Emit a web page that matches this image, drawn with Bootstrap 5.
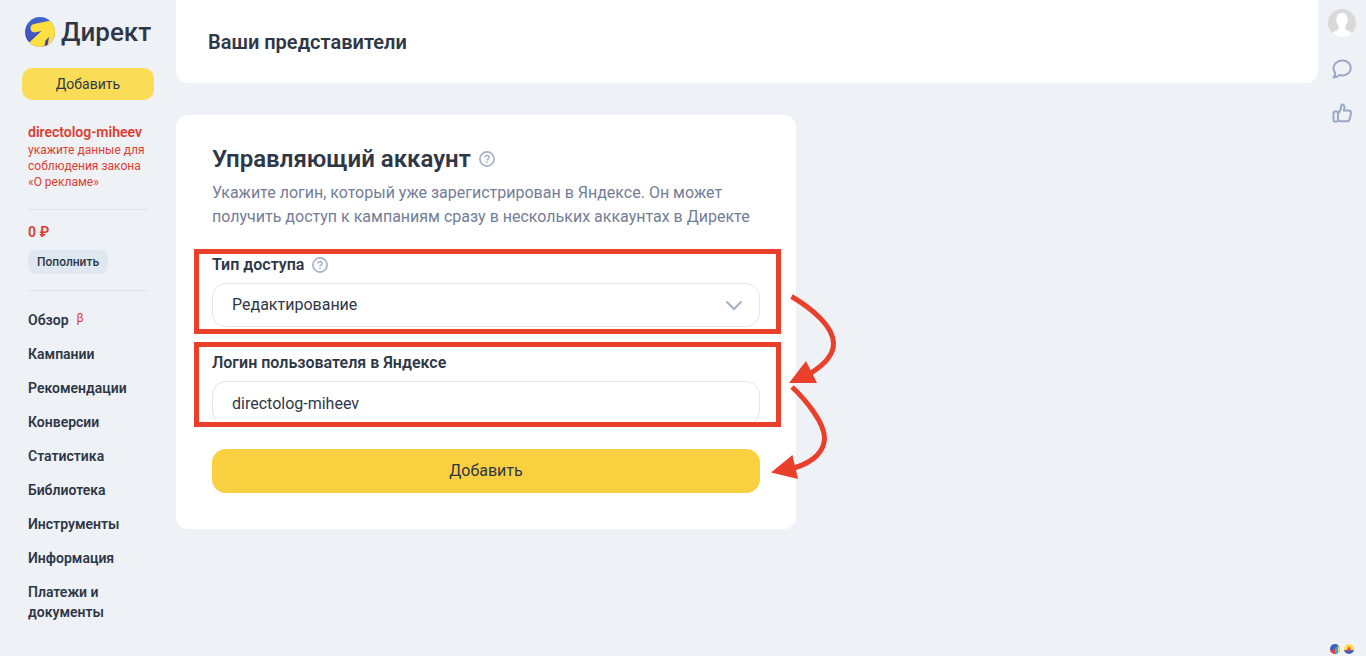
<!DOCTYPE html>
<html lang="ru">
<head>
<meta charset="utf-8">
<meta name="viewport" content="width=device-width, initial-scale=1">
<title>Директ — Ваши представители</title>
<link href="https://cdn.jsdelivr.net/npm/bootstrap@5.3.0/dist/css/bootstrap.min.css" rel="stylesheet">
<style>
  body { background: #eef2f7; color: #2f3747; font-family: Roboto, "Noto Sans", sans-serif; font-size: 14px; line-height: 20px; }
  a { text-decoration: none; }
  .side { width: 176px; padding: 16px 22px 16px; }
  .brand-link { padding-left: 2px; gap: 5px; }
  .brand-name { font-size: 26px; line-height: 32px; font-weight: 500; color: #2f3747; }
  .btn-sun { --bs-btn-color: #2f3747; --bs-btn-hover-color: #2f3747; --bs-btn-bg: #fbdc57; --bs-btn-hover-bg: #f9d040; border: 0; border-radius: 10px; height: 32px; font-size: 14px; line-height: 20px; }
  .btn-add { margin-top: 20px; }
  .btn-big { --bs-btn-bg: #f9d040; border-radius: 14px; height: 44px; font-size: 16px; }
  .side-body { padding: 0 6px; margin-top: 22px; }
  .alert-red { color: #dd3d2f; }
  .login { font-weight: 600; }
  .notice { font-size: 12px; line-height: 16px; font-weight: 400; }
  .side-line { border-top: 1px solid #dde4ed; }
  .sum-line { margin-top: 19px; padding-top: 12px; }
  .btn-top { --bs-btn-color: #2f3747; --bs-btn-bg: #dfe7f0; --bs-btn-hover-bg: #d3deea; --bs-btn-hover-color: #2f3747; border: 0; border-radius: 8px; height: 24px; padding: 0 9px; font-size: 12px; line-height: 24px; font-weight: 500; }
  .menu-line { margin-top: 16px; padding-top: 12px; }
  .menu a { color: #2f3747; font-weight: 600; padding: 7px 0; }
  .menu .beta { font-size: 12px; line-height: 1; font-weight: 400; margin-left: 8px; top: -3px; }
  .page-head { height: 83px; border-radius: 0 0 12px 12px; padding: 0 32px; }
  .page-head h1 { font-size: 20px; line-height: 24px; font-weight: 600; }
  .panel { max-width: 620px; border-radius: 12px; margin-top: 32px; padding: 28px 36px 36px; }
  .panel h2 { font-size: 24px; line-height: 32px; font-weight: 600; }
  .hint { font-size: 16px; line-height: 24px; color: #737d95; margin-top: 6px; }
  .ask { width: 16px; height: 16px; }
  .field label { display: block; font-size: 16px; line-height: 24px; font-weight: 600; }
  .field .form-control, .field .form-select { height: 44px; margin-top: 6px; padding: 0 19px; border: 1px solid #e3e6f0; border-radius: 14px; color: #2f3747; font-size: 16px; line-height: 24px; }
  .field .form-select { background-image: none; }
  .chevron { right: 17px; bottom: 12px; pointer-events: none; }
  .frame { left: -18px; right: -21px; height: 85px; border: 5px solid #ea402b; pointer-events: none; }
  .frame-type { top: -4px; }
  .frame-login { top: -9px; }
  .under { height: 4px; left: 0; right: 0; bottom: 0; background: #fff; }
  .arrows { left: calc(100% - 26px); top: 175px; pointer-events: none; }
  .rail { width: 48px; padding: 9px 0 2px; }
  .rail-link { margin-top: 22px; }
</style>
</head>
<body>
<div class="d-flex min-vh-100">
  <aside class="side flex-shrink-0">
    <a href="#" class="brand-link d-flex align-items-center" aria-label="Директ">
      <svg class="flex-shrink-0" width="32" height="32" viewBox="0 0 32 32" aria-hidden="true">
        <defs>
          <clipPath id="disc"><circle cx="16" cy="16" r="15"/></clipPath>
          <linearGradient id="blue" x2="0" y2="1"><stop offset="0" stop-color="#4268cf"/><stop offset="1" stop-color="#4346b4"/></linearGradient>
        </defs>
        <g clip-path="url(#disc)">
          <rect width="32" height="32" fill="url(#blue)"/>
          <path d="M10 8 27 4.500 32 8V32H22L24.500 21.500 12 33 2 29.500 17.500 15 10.500 16.500C5.500 16.500 5 9 10 8Z" fill="#ffe03f"/>
          <path d="M24.500 21.500 14 28.500 12 33H20.500Z" fill="#ffe03f"/>
          <path d="M20 33 21.500 24.500 25 21 23 33Z" fill="#4b3fae"/>
        </g>
      </svg>
      <span class="brand-name">Директ</span>
    </a>
    <button type="button" class="btn btn-sun btn-add w-100 py-0">Добавить</button>
    <div class="side-body">
      <div class="alert-red">
        <a href="#" class="alert-red login d-block text-nowrap">directolog-miheev</a>
        <a href="#" class="alert-red notice d-block">укажите данные для соблюдения закона «О&nbsp;рекламе»</a>
      </div>
      <div class="side-line sum-line"></div>
      <div class="alert-red login">0 ₽</div>
      <button type="button" class="btn btn-top mt-2">Пополнить</button>
      <div class="side-line menu-line"></div>
      <nav class="menu d-flex flex-column">
        <a href="#">Обзор<sup class="beta alert-red">β</sup></a>
        <a href="#">Кампании</a>
        <a href="#">Рекомендации</a>
        <a href="#">Конверсии</a>
        <a href="#">Статистика</a>
        <a href="#">Библиотека</a>
        <a href="#">Инструменты</a>
        <a href="#">Информация</a>
        <a href="#">Платежи и документы</a>
      </nav>
    </div>
  </aside>

  <main class="flex-grow-1">
    <header class="page-head bg-white d-flex align-items-center"><h1 class="m-0">Ваши представители</h1></header>
    <form class="panel bg-white position-relative">
      <div class="d-flex align-items-center gap-2">
        <h2 class="m-0">Управляющий аккаунт</h2>
        <svg class="ask" viewBox="0 0 16 16" fill="none" stroke="#a6b0c6" stroke-width="1.700" aria-hidden="true"><circle cx="8" cy="8" r="7.100"/><path d="M5.900 6.500a2.100 2 0 1 1 3 1.700Q8 8.600 8 9.500M8 10.500v1.500" stroke-width="1.500"/></svg>
      </div>
      <p class="hint mb-4">Укажите логин, который уже зарегистрирован в Яндексе. Он может получить доступ к кампаниям сразу в нескольких аккаунтах в Директе</p>
      <div class="field position-relative">
        <div class="d-flex align-items-center gap-2">
          <label for="access">Тип доступа</label>
          <svg class="ask" viewBox="0 0 16 16" fill="none" stroke="#a6b0c6" stroke-width="1.700" aria-hidden="true"><circle cx="8" cy="8" r="7.100"/><path d="M5.900 6.500a2.100 2 0 1 1 3 1.700Q8 8.600 8 9.500M8 10.500v1.500" stroke-width="1.500"/></svg>
        </div>
        <select id="access" class="form-select"><option>Редактирование</option></select>
        <svg class="chevron position-absolute" width="18" height="18" viewBox="0 0 18 18" fill="none" stroke="#a6b0c6" stroke-width="2" stroke-linecap="round" aria-hidden="true"><path d="M2 5l7 7 7-7"/></svg>
        <div class="frame frame-type position-absolute"></div>
      </div>
      <div class="field position-relative mt-4">
        <label for="login">Логин пользователя в Яндексе</label>
        <input id="login" type="text" class="form-control" value="directolog-miheev">
        <div class="under position-absolute"></div>
        <div class="frame frame-login position-absolute"></div>
      </div>
      <button type="submit" class="btn btn-sun btn-big w-100 py-0 mt-4">Добавить</button>
      <svg class="arrows position-absolute" width="70" height="195" viewBox="0 0 70 195" aria-hidden="true">
        <g fill="none" stroke="#ea402b" stroke-width="5">
          <path d="M21.500 6.500C41 18 63.500 36 63.500 53.500C63.500 65 54 75 40 83.500"/>
          <path d="M22 97C36 110 54.500 133 54.500 148C54.500 161 44 172 24 178"/>
        </g>
        <g fill="#ea402b"><path d="M19 93 36 71 47 93Z"/><path d="M1 182.500 22.500 165 28 189Z"/></g>
      </svg>
    </form>
  </main>

  <aside class="rail flex-shrink-0 d-flex flex-column align-items-center">
    <svg width="28" height="28" viewBox="0 0 28 28" role="img" aria-label="Профиль">
      <defs><clipPath id="face"><circle cx="14" cy="14" r="14"/></clipPath></defs>
      <g clip-path="url(#face)"><rect width="28" height="28" fill="#d9d9d9"/><path d="M14 4c3.500 0 5.500 2 5.500 6l.3 2c0 1.500-.8 2-1.300 2.500-.3 1.500-.8 2.500-1.500 3.500 0 2 .5 3 2.500 3.500 3.500 1 5.500 2.500 6 6.500H3c.5-4 2.500-5.500 5.500-6.500 2-.5 2.500-1.500 2.500-3.500-.7-1-1.200-2-1.500-3.500-.5-.5-1.300-1-1.300-2.500l.3-2c0-4 2-6 5.500-6Z" fill="#fff"/></g>
    </svg>
    <a href="#" class="rail-link d-block" aria-label="Сообщения"><svg class="d-block" width="20" height="20" viewBox="0 0 20 20" fill="none" stroke="#9aa8c4" stroke-width="2" stroke-linejoin="round"><path d="M10.500 1.500C15.500 1.500 18.700 4.800 18.700 9s-3.200 7.500-8.200 7.500c-1 0-2-.2-2.900-.5C6 17.300 4.200 18.500 1.500 18.500c1.300-1.500 1.800-2.800 1.700-4.300C2.100 12.700 1.500 11 1.500 9c0-4.200 4-7.500 9-7.500Z"/></svg></a>
    <a href="#" class="d-block mt-4" aria-label="Оценить"><svg class="d-block" width="20" height="20" viewBox="0 0 20 20" fill="none" stroke="#9aa8c4" stroke-width="2" stroke-linejoin="round"><path d="M2.500 8.500H5q1 0 1 1v8q0 1-1 1H2.500q-1 0-1-1V9.500q0-1 1-1Z M6 10.500C8.200 8.500 9.200 6.500 9.200 2.800c0-2.200 3.300-1.600 3.300 1.200 0 1.500-.4 2.500-.7 3.500h4.700c2 0 2.700 1.300 2.400 3l-1 5c-.4 2-1.400 2.800-2.900 2.800H10c-1.500 0-2.500-.3-4-1"/></svg></a>
    <div class="d-flex gap-1 mt-auto">
      <svg width="10" height="10" viewBox="0 0 10 10" aria-hidden="true"><defs><clipPath id="m1"><circle cx="5" cy="5" r="5"/></clipPath></defs><g clip-path="url(#m1)"><path fill="#3c5cc8" d="M0 0h10v10H0z"/><path fill="#e8414a" d="M0 6 5 5V10H0Z"/><path fill="#29aef5" d="M5 4 8 2V10H5Z"/><path fill="#ffdc4d" d="M8 0h2v10H8Z"/></g></svg>
      <svg width="10" height="10" viewBox="0 0 10 10" aria-hidden="true"><defs><clipPath id="m2"><circle cx="5" cy="5" r="5"/></clipPath></defs><g clip-path="url(#m2)"><path fill="#ffdc4d" d="M0 0h10v10H0z"/><path fill="#3c5cc8" d="M0 6h10v4H0Z"/><path fill="#e8414a" d="M5 2 7.500 7h-5Z"/></g></svg>
    </div>
  </aside>
</div>
<script src="https://cdn.jsdelivr.net/npm/bootstrap@5.3.0/dist/js/bootstrap.bundle.min.js"></script>
</body>
</html>
